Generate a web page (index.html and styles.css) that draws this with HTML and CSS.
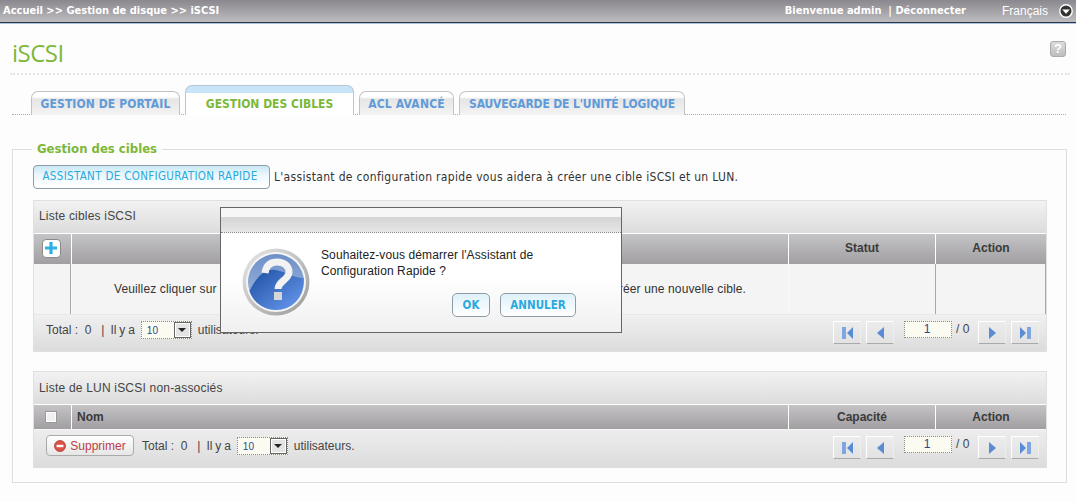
FILE: index.html
```html
<!DOCTYPE html>
<html lang="fr">
<head>
<meta charset="utf-8">
<title>iSCSI</title>
<link rel="stylesheet" href="styles.css">
</head>
<body>
<header class="topbar">
  <div class="crumbs">Accueil &gt;&gt; Gestion de disque &gt;&gt; iSCSI</div>
  <div class="welcome">Bienvenue admin&nbsp; | Déconnecter</div>
  <div class="lang">Français</div>
  <svg class="lang-arrow" width="14" height="14" viewBox="0 0 14 14"><circle cx="7" cy="7" r="6.2" fill="#333" stroke="#fff" stroke-width="1.4"/><path d="M3.2 5.4h7.6L7 9.8z" fill="#fff"/></svg>
</header>
<main class="page">
  <div class="title-row">
    <h1 class="title">iSCSI</h1>
    <span class="help">?</span>
  </div>
  <nav class="tabs">
    <a class="tab tab-1">GESTION DE PORTAIL</a>
    <a class="tab tab-active">GESTION DES CIBLES</a>
    <a class="tab tab-3">ACL AVANCÉ</a>
    <a class="tab tab-4">SAUVEGARDE DE L'UNITÉ LOGIQUE</a>
  </nav>
  <fieldset class="box">
    <legend class="box-legend">Gestion des cibles</legend>
    <div class="wizard-row">
      <button class="wizard-btn">ASSISTANT DE CONFIGURATION RAPIDE</button>
      <span class="wizard-text">L'assistant de configuration rapide vous aidera à créer une cible iSCSI et un LUN.</span>
    </div>

    <section class="panel panel-targets">
      <div class="panel-title">Liste cibles iSCSI</div>
      <div class="grid head head-tall">
        <div class="cell cell-first">
          <span class="plus"><svg width="12" height="12" viewBox="0 0 12 12"><path d="M4.400 0h3.200v4.400H12v3.200H7.600V12H4.400V7.600H0V4.400h4.400z" fill="#2fb0e6"/></svg></span>
        </div>
        <div class="cell"></div>
        <div class="cell cell-center">Statut</div>
        <div class="cell cell-center">Action</div>
      </div>
      <div class="grid body">
        <div class="bcell bcell-first"></div>
        <div class="bcell bcell-msg">Veuillez cliquer sur l'icône plus dans le coin supérieur gauche de ce tableau afin de pouvoir créer une nouvelle cible.</div>
        <div class="bcell bcell-dark"></div>
        <div class="bcell bcell-dark bcell-last"></div>
      </div>
      <div class="foot foot-targets">
        <span class="info">Total :&nbsp; 0 &nbsp; |&ensp;<span class="tight">Il y a</span></span>
        <span class="select"><span class="select-val">10</span><span class="select-arrow"><i></i></span></span>
        <span class="info">utilisateurs.</span>
        <div class="pager">
          <button class="pg"><svg width="11" height="12" viewBox="0 0 11 12"><path d="M0 0h4v12H0z" fill="#7ea6e2"/><path d="M11 0v12L5 6z" fill="#5a8cd6"/></svg></button>
          <button class="pg"><svg width="7" height="12" viewBox="0 0 7 12"><path d="M7 0v12L0 6z" fill="#5a8cd6"/></svg></button>
          <span class="pg-input">1</span>
          <span class="pg-total">/ 0</span>
          <button class="pg"><svg width="7" height="12" viewBox="0 0 7 12"><path d="M0 0v12l7-6z" fill="#5a8cd6"/></svg></button>
          <button class="pg"><svg width="11" height="12" viewBox="0 0 11 12"><path d="M0 0v12l6-6z" fill="#5a8cd6"/><path d="M7 0h4v12H7z" fill="#7ea6e2"/></svg></button>
        </div>
      </div>
    </section>

    <section class="panel panel-lun">
      <div class="panel-title">Liste de LUN iSCSI non-associés</div>
      <div class="grid head head-short">
        <div class="cell cell-first"><span class="check"></span></div>
        <div class="cell cell-left">Nom</div>
        <div class="cell cell-center">Capacité</div>
        <div class="cell cell-center">Action</div>
      </div>
      <div class="foot foot-lun">
        <button class="del"><svg width="12" height="12" viewBox="0 0 12 12"><circle cx="6" cy="6" r="5.500" fill="#d9534a" stroke="#b03a32" stroke-width=".8"/><path d="M2.600 4.800h6.800v2.400H2.600z" fill="#fff"/></svg>Supprimer</button>
        <span class="info">Total :&nbsp; 0 &nbsp; |&ensp;<span class="tight">Il y a</span></span>
        <span class="select"><span class="select-val">10</span><span class="select-arrow"><i></i></span></span>
        <span class="info">utilisateurs.</span>
        <div class="pager">
          <button class="pg"><svg width="11" height="12" viewBox="0 0 11 12"><path d="M0 0h4v12H0z" fill="#7ea6e2"/><path d="M11 0v12L5 6z" fill="#5a8cd6"/></svg></button>
          <button class="pg"><svg width="7" height="12" viewBox="0 0 7 12"><path d="M7 0v12L0 6z" fill="#5a8cd6"/></svg></button>
          <span class="pg-input">1</span>
          <span class="pg-total">/ 0</span>
          <button class="pg"><svg width="7" height="12" viewBox="0 0 7 12"><path d="M0 0v12l7-6z" fill="#5a8cd6"/></svg></button>
          <button class="pg"><svg width="11" height="12" viewBox="0 0 11 12"><path d="M0 0v12l6-6z" fill="#5a8cd6"/><path d="M7 0h4v12H7z" fill="#7ea6e2"/></svg></button>
        </div>
      </div>
    </section>
  </fieldset>
</main>

<div class="dialog">
  <div class="dialog-band"></div>
  <div class="dialog-body">
    <svg class="dialog-icon" width="68" height="68" viewBox="0 0 68 68">
      <defs>
        <linearGradient id="ring" x1="0" y1="0" x2="1" y2="1"><stop offset="0" stop-color="#e8e8e8"/><stop offset="1" stop-color="#9a9a9a"/></linearGradient>
        <linearGradient id="sky" x1="0" y1="0" x2="0" y2="1"><stop offset="0" stop-color="#6d8fc8"/><stop offset="1" stop-color="#a9bee0"/></linearGradient>
        <linearGradient id="sea" x1="0" y1="0" x2="1" y2="1"><stop offset="0" stop-color="#1c4ea0"/><stop offset="1" stop-color="#6b9cf2"/></linearGradient>
      </defs>
      <circle cx="34" cy="34" r="33.500" fill="url(#ring)"/>
      <circle cx="34" cy="34" r="30" fill="#f4f4f4"/>
      <circle cx="34" cy="34" r="28" fill="url(#sky)"/>
      <path d="M7.500 43C14 30 22 20 34 22c10 2 18 8 27.600 8C62.500 50 50 62 34 62 21 62 11 54 7.500 43z" fill="url(#sea)"/>
      <path d="M23 25c1-8 6-11 12-11 7 0 12 4 12 10 0 8-11 9-11 17" fill="none" stroke="#f2f2f2" stroke-width="7"/>
      <path d="M32 44h8v8h-8z" fill="#d6d6d6"/>
    </svg>
    <div class="dialog-main">
      <p class="dialog-text">Souhaitez-vous démarrer l'Assistant de<br>Configuration Rapide ?</p>
      <div class="dialog-actions">
        <button class="dlg-btn dlg-ok">OK</button>
        <button class="dlg-btn dlg-cancel">ANNULER</button>
      </div>
    </div>
  </div>
</div>
</body>
</html>
```
FILE: styles.css
```css
* { box-sizing: border-box; }
html, body { margin: 0; height: 502px; overflow: hidden; }
body { background: #fdfdfd; font-family: "Liberation Sans", Arial, sans-serif; font-size: 12px; color: #333; position: relative; }

.topbar { height: 24px; display: flex; align-items: center; padding: 0 3px 3px; color: #fff; background: linear-gradient(#8a888e, #bdbcbf 22px, #333 22px, #333 23px, #a9c2ec 23px); font: bold 11px "DejaVu Sans Condensed", "DejaVu Sans", sans-serif; }
.crumbs { flex: 1; }
.welcome { margin-right: 36px; }
.lang { font: 12px "Liberation Sans", sans-serif; margin-right: 11px; }
.lang-arrow { margin-top: 1px; }

.page { padding: 0 9px 0 12px; }
.title-row { height: 51px; margin: 0 -3px 0 -2px; padding: 0 4px 0 2px; display: flex; justify-content: space-between; align-items: flex-start; border-bottom: 2px dotted #e4e4dc; }
.title { margin: 14px 0 0; font: 24px/30px "Open Sans", sans-serif; color: #7cb83a; letter-spacing: -.5px; }
.help { width: 16px; height: 16px; margin-top: 17px; border: 1px solid #aaa; border-radius: 3px; background: linear-gradient(#dcdcdc, #bdbdbd); color: #fff; font: bold 13px/14px "Liberation Sans", sans-serif; text-align: center; }

.tabs { height: 40px; display: flex; align-items: flex-end; gap: 5px; padding-left: 19px; border-bottom: 1px dotted #aaa; margin-right: 1px; }
.tab { height: 24px; margin-bottom: -1px; border: 1px solid #c2c2c2; border-bottom: 0; border-radius: 7px 7px 0 0; background: linear-gradient(#fff 0, #fff 5px, #e5e5e5 7px, #f4f4f4 100%); color: #5f9bd8; font: bold 12px/24px "DejaVu Sans Condensed", "DejaVu Sans", sans-serif; text-align: center; }
.tab-1 { width: 149px; letter-spacing: .1px; }
.tab-3 { width: 95px; letter-spacing: .2px; }
.tab-4 { width: 226px; letter-spacing: -.15px; }
.tab-active { width: 169px; height: 30px; line-height: 36px; border-top-color: #b5c6d6; background: linear-gradient(#c7e4f9 0, #c7e4f9 7px, #fff 7px); color: #7cb83a; }

.box { margin: 26px 0 0; padding: 0 19px 15px 20px; height: 342px; border: 1px solid #ddd; min-width: 0; }
.box-legend { margin-left: -1px; padding: 0 5px; font: bold 13px/16px "DejaVu Sans Condensed", "DejaVu Sans", sans-serif; color: #7cb83a; }

.wizard-row { display: flex; align-items: center; gap: 4px; margin-top: 8px; height: 24px; }
.wizard-btn { width: 237px; height: 24px; padding: 0 3px 2px 0; border: 1px solid #8f9ba5; border-radius: 4px; background: linear-gradient(#c9e8f6, #eef8fc 45%, #fff); color: #2aa9dd; font: 11.5px "DejaVu Sans Condensed", "DejaVu Sans", sans-serif; letter-spacing: .33px; }
.wizard-text { font-size: 12px; font-family: "DejaVu Sans Condensed", "DejaVu Sans", sans-serif; color: #333; letter-spacing: .32px; }

.panel { border: 1px solid #e0e0e0; background: #dcdcdc; }
.panel-targets { margin-top: 11px; }
.panel-lun { margin-top: 19px; }
.panel-title { height: 32px; padding-left: 5px; line-height: 30px; color: #444; letter-spacing: .2px; background: linear-gradient(#f2f2f2, #dcdcdc); }
.panel-lun .panel-title { line-height: 32px; }

.grid { display: grid; grid-template-columns: 37px 1fr 147px 111px; }
.head { border-top: 1px solid #fff; background: linear-gradient(#c4c3c5, #a19fa2); font-weight: bold; color: #3a3a3a; }
.head-tall { height: 31px; }
.head-short { height: 26px; border-bottom: 1px solid #f6f6f6; }
.cell { display: flex; align-items: center; border-left: 1px solid #fff; padding-bottom: 2px; }
.head-short .cell { padding-bottom: 0; }
.cell-first { border-left: 0; justify-content: center; padding: 0 3px 2px 0; }
.cell-center { justify-content: center; }
.cell-left { padding-left: 5px; }
.plus { width: 19px; height: 19px; display: flex; align-items: center; justify-content: center; background: #fff; border: 1px solid #8a8a8a; border-radius: 4px; }
.check { width: 12px; height: 12px; border: 1px solid #999; background: #f0f0f0; box-shadow: inset 0 0 0 1px #fff; }

.body { height: 51px; background: #f4f4f4; border-bottom: 1px solid #e8e8e8; }
.bcell { border-left: 1px solid #f9f9f9; }
.bcell-first { border-left: 0; border-right: 1px solid #a8a8a8; }
.bcell-msg { display: flex; align-items: center; justify-content: center; white-space: nowrap; letter-spacing: .13px; }
.bcell-dark { border-left: 1px solid #f9f9f9; }
.bcell-dark:nth-child(4) { border-left: 1px solid #a8a8a8; }
.bcell-last { border-right: 1px solid #a8a8a8; }

.foot { display: flex; align-items: center; background: #dcdcdc; padding-left: 12px; }
.foot-targets { height: 36px; background: linear-gradient(#f0f0f0, #dcdcdc); padding-bottom: 6px; gap: 6px; }
.foot-lun { height: 37px; padding-bottom: 6px; gap: 6px; background: linear-gradient(#ededed, #dcdcdc); }
.info { color: #444; }
.tight { word-spacing: -.5px; }
.select { width: 51px; height: 18px; display: flex; border: 1px dotted #888; background: #fbfbf2; }
.select-val { flex: 1; padding-left: 5px; font-size: 10px; line-height: 17px; color: #2a4a8a; }
.select-arrow { width: 17px; display: flex; align-items: center; justify-content: center; background: #e4e4e4; border: 1px solid #666; box-shadow: inset 0 0 0 1px #fff; }
.select-arrow i { border: 4px solid transparent; border-top: 4px solid #222; border-bottom: 0; }

.del { width: 88px; height: 21px; padding: 0; display: flex; align-items: center; justify-content: center; gap: 4px; margin-right: 2px; border: 1px solid #aaa; border-radius: 4px; background: linear-gradient(#fff, #e6e6e6); color: #c0404a; font: 12px "Liberation Sans", sans-serif; }

.pager { align-self: flex-start; margin-left: auto; margin-right: 7px; display: flex; align-items: flex-start; gap: 5px; padding-top: 6px; }
.pg { width: 28px; height: 23px; padding: 0; display: flex; align-items: center; justify-content: center; border: 1px solid #fff; border-bottom-color: #aaa; border-right-color: #eee; background: linear-gradient(#ececec, #e2e2e2); }
.pg-input { width: 48px; height: 17px; margin-left: 5px; padding-right: 2px; text-align: center; line-height: 15px; border: 1px dotted #888; background: #fbfbf2; color: #2a4a8a; }
.pg-total { width: 18px; margin-left: -2px; padding-left: 1px; line-height: 16px; color: #444; }

.dialog { position: absolute; left: 220px; top: 207px; width: 402px; height: 126px; border: 1px solid #666; background: linear-gradient(#fff 55%, #f0f0f0); }
.dialog-band { height: 25px; background: linear-gradient(#f6f6f6 0, #f6f6f6 9px, #d4d4d4 9px, #e6e6e6 100%); border-bottom: 1px dotted #888; }
.dialog-body { display: flex; padding: 15px 0 0 21px; }
.dialog-icon { flex: none; }
.dialog-main { margin-left: 11px; flex: 1; }
.dialog-text { margin: -1px 0 0; font-size: 12px; line-height: 16px; color: #222; letter-spacing: .1px; }
.dialog-actions { display: flex; gap: 10px; margin-top: 14px; padding-left: 131px; }
.dlg-btn { height: 24px; padding: 0; border: 1px solid #8f9ba5; border-radius: 5px; background: linear-gradient(#dff1f9, #fff); color: #2aa9dd; font: bold 11.5px "DejaVu Sans Condensed", "DejaVu Sans", sans-serif; }
.dlg-ok { width: 38px; }
.dlg-cancel { width: 76px; }
```
